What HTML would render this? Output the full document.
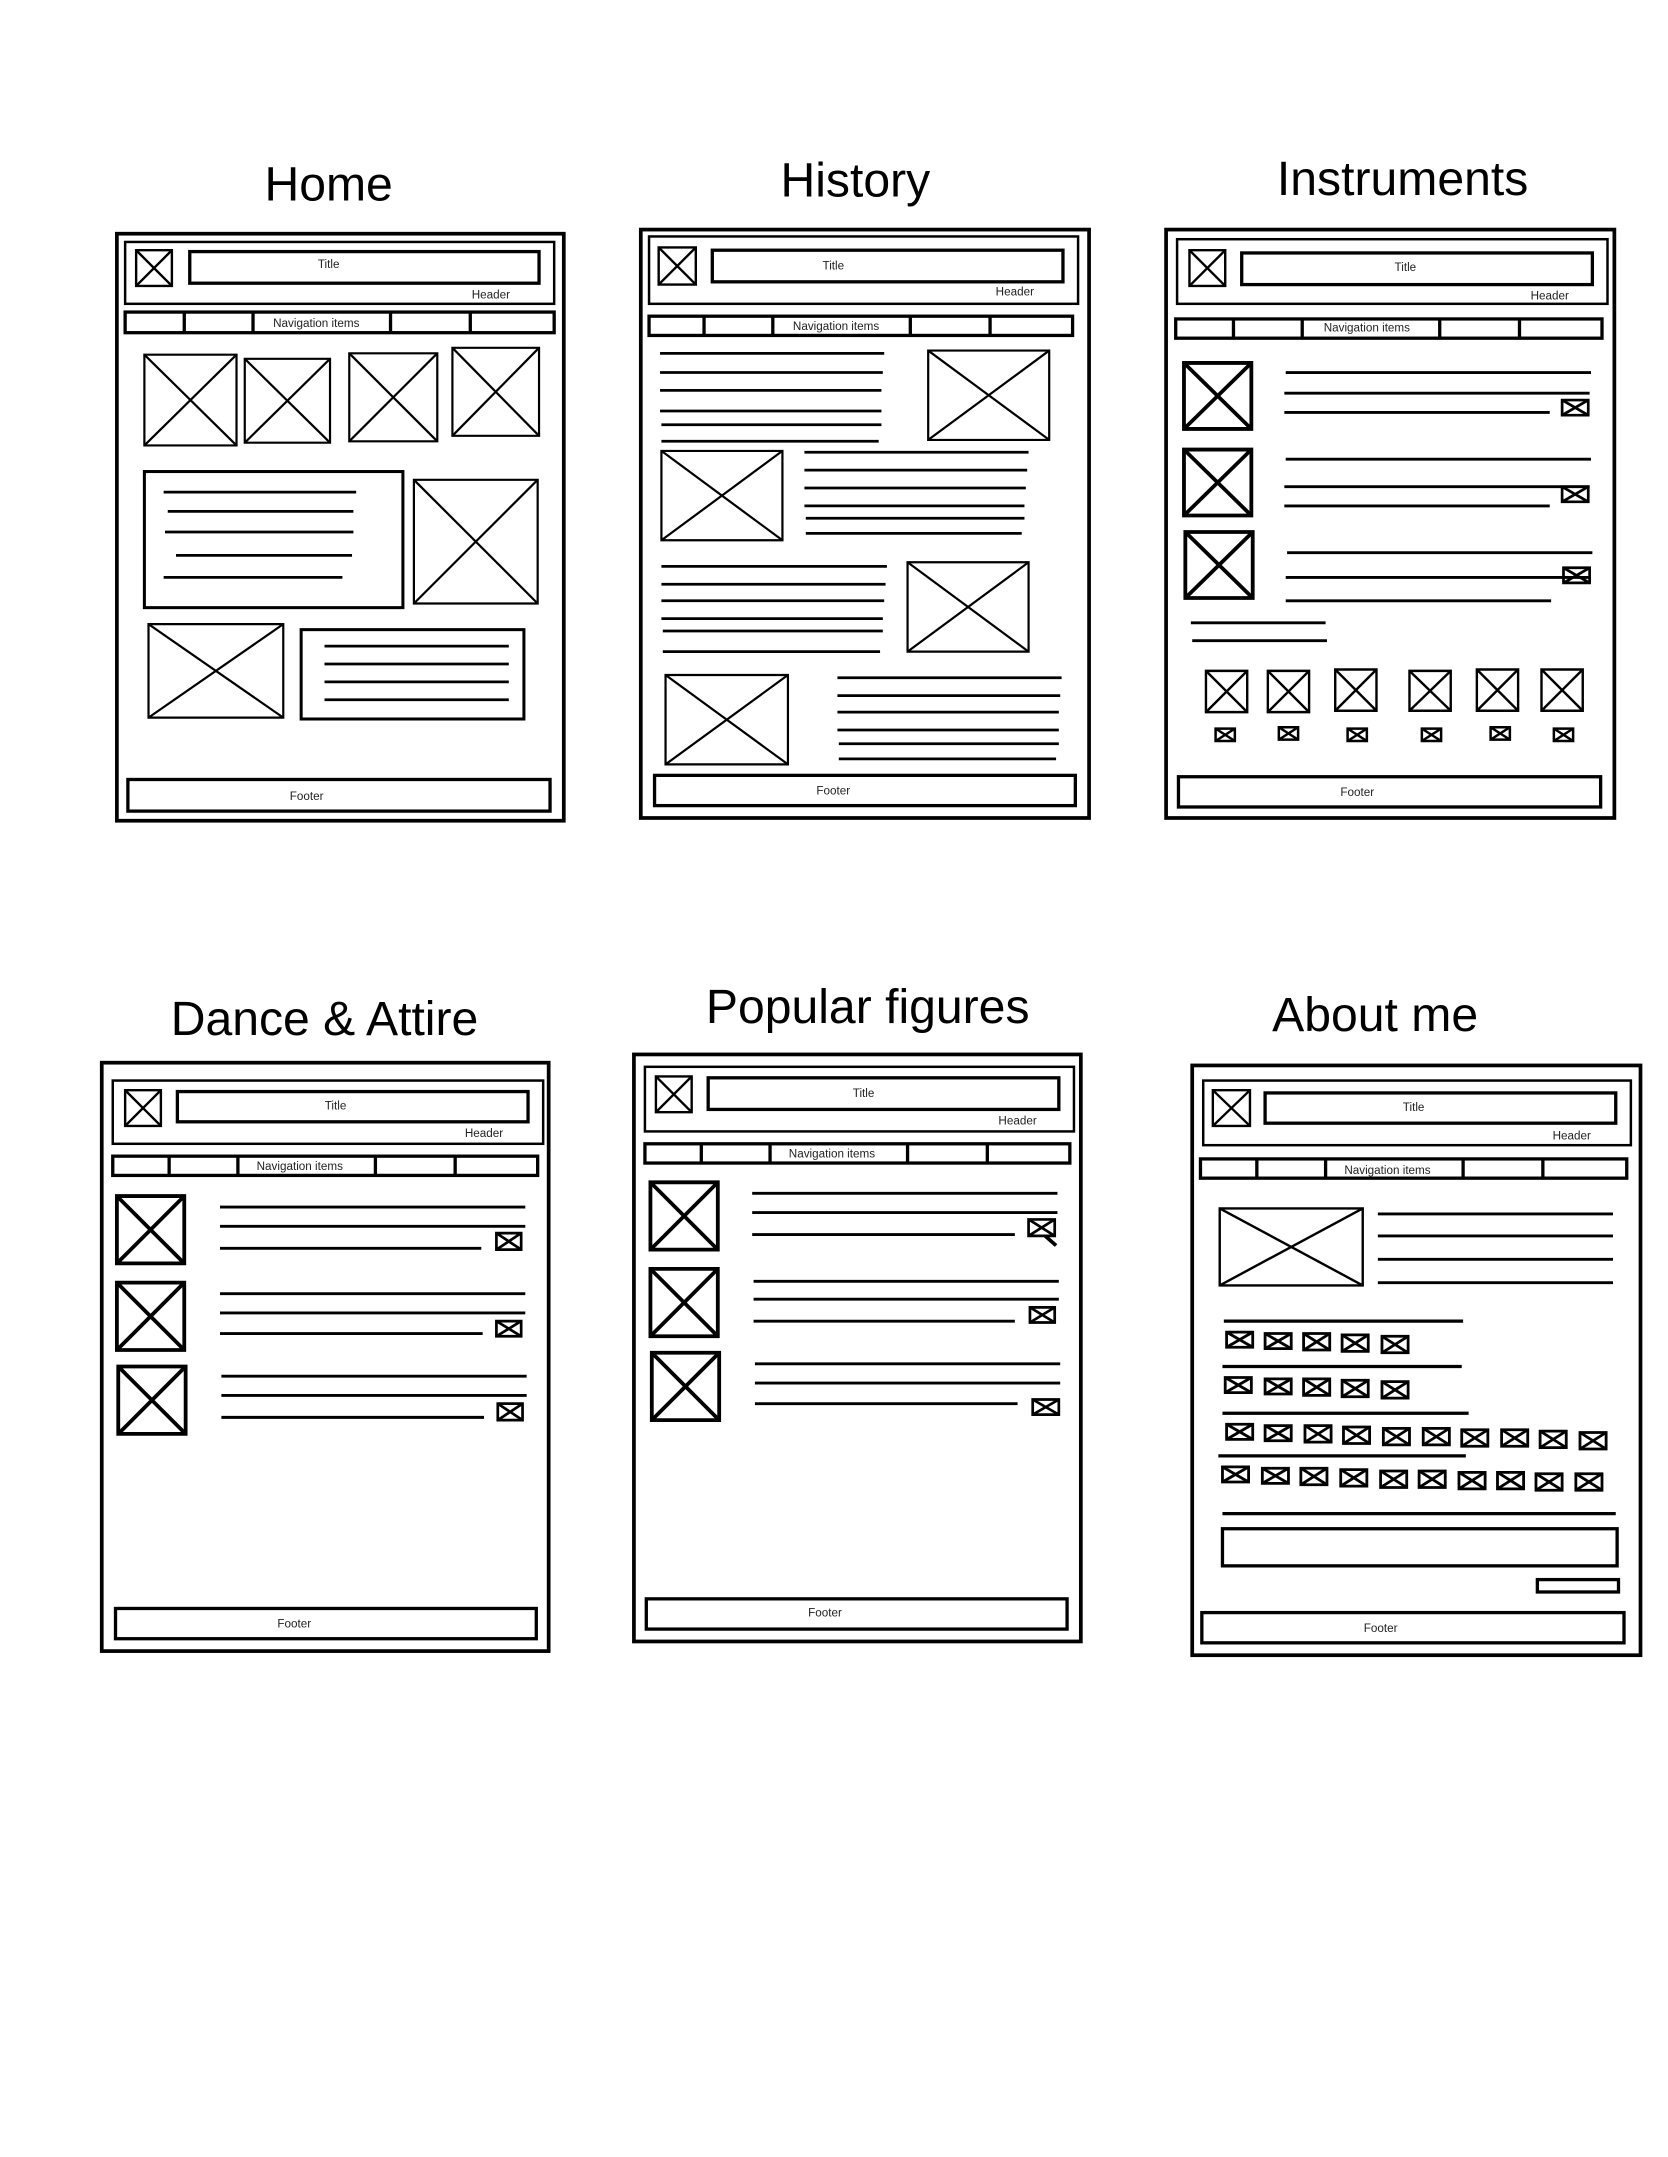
<!DOCTYPE html>
<html><head><meta charset="utf-8"><style>
html,body{margin:0;padding:0;background:#fff;width:1668px;height:2157px;overflow:hidden}
svg{display:block}
text{font-family:"Liberation Sans",sans-serif;fill:#000}
.t{font-size:35px;text-anchor:middle}
.s{font-size:8.5px;text-anchor:middle;fill:#222}
</style></head><body>
<svg width="1668" height="2157" viewBox="0 0 1213 1569" preserveAspectRatio="none" xmlns="http://www.w3.org/2000/svg">
<defs>
<symbol id="x" viewBox="0 0 100 100" preserveAspectRatio="none" overflow="visible">
<g fill="none" stroke="#000" vector-effect="non-scaling-stroke">
<rect x="0" y="0" width="100" height="100" vector-effect="non-scaling-stroke"/>
<line x1="0" y1="0" x2="100" y2="100" vector-effect="non-scaling-stroke"/>
<line x1="100" y1="0" x2="0" y2="100" vector-effect="non-scaling-stroke"/>
</g></symbol>
</defs>
<g fill="none" stroke="#000" stroke-width="2.4">

<!-- HOME -->
<rect x="85" y="170" width="325" height="427" stroke-width="2.7"/>
<rect x="91" y="176" width="312" height="45" stroke-width="1.8"/>
<use href="#x" x="99" y="182" width="26" height="26" stroke-width="2.4"/>
<rect x="138" y="183" width="254" height="23"/>
<rect x="91" y="227" width="312" height="15"/>
<path d="M134 227v15M184 227v15M284 227v15M342 227v15"/>
<use href="#x" x="105" y="258" width="67" height="66" stroke-width="2.2"/>
<use href="#x" x="178" y="261" width="62" height="61" stroke-width="2.2"/>
<use href="#x" x="254" y="257" width="64" height="64" stroke-width="2.2"/>
<use href="#x" x="329" y="253" width="63" height="64" stroke-width="2.2"/>
<rect x="105" y="343" width="188" height="99" stroke-width="2.2"/>
<path d="M119 358h140M122 372h135M120 387h137M128 404h128M119 420h130" stroke-width="2"/>
<use href="#x" x="301" y="349" width="90" height="90" stroke-width="2.2"/>
<use href="#x" x="108" y="454" width="98" height="68" stroke-width="2.2"/>
<rect x="219" y="458" width="162" height="65" stroke-width="2.2"/>
<path d="M236 470h134M236 483h134M236 496h134M236 509h134" stroke-width="2"/>
<rect x="93" y="567" width="307" height="23"/>

<!-- HISTORY -->
<rect x="466" y="167" width="326" height="428" stroke-width="2.7"/>
<rect x="472" y="172" width="312" height="49" stroke-width="1.8"/>
<use href="#x" x="479" y="180" width="27" height="27" stroke-width="2.4"/>
<rect x="518" y="182" width="255" height="23"/>
<rect x="472" y="230" width="308" height="14"/>
<path d="M512 230v14M562 230v14M662 230v14M720 230v14"/>
<path d="M480 257h163M480 271h162M480 284h161M480 299h161M481 309h160M481 321h158" stroke-width="2"/>
<use href="#x" x="675" y="255" width="88" height="65" stroke-width="2.2"/>
<use href="#x" x="481" y="328" width="88" height="65" stroke-width="2.2"/>
<path d="M585 329h163M585 342h162M585 355h161M585 368h160M586 377h159M586 388h157" stroke-width="2"/>
<path d="M481 412h164M481 425h163M481 437h162M481 450h161M482 459h160M482 474h158" stroke-width="2"/>
<use href="#x" x="660" y="409" width="88" height="65" stroke-width="2.2"/>
<use href="#x" x="484" y="491" width="89" height="65" stroke-width="2.2"/>
<path d="M609 493h163M609 506h162M609 518h161M609 531h161M610 541h160M610 552h158" stroke-width="2"/>
<rect x="476" y="564" width="306" height="22"/>

<!-- INSTRUMENTS -->
<rect x="848" y="167" width="326" height="428" stroke-width="2.7"/>
<rect x="856" y="174" width="313" height="47" stroke-width="1.8"/>
<use href="#x" x="865" y="182" width="26" height="26" stroke-width="2.4"/>
<rect x="903" y="184" width="255" height="23"/>
<rect x="855" y="232" width="310" height="14"/>
<path d="M897 232v14M947 232v14M1047 232v14M1105 232v14"/>
<use href="#x" x="861" y="264" width="49" height="48" stroke-width="3.8"/>
<use href="#x" x="861" y="327" width="49" height="48" stroke-width="3.8"/>
<use href="#x" x="862" y="387" width="49" height="48" stroke-width="3.8"/>
<path d="M935 271h222M934 286h222M934 300h193M935 334h222M934 354h222M934 368h193M936 402h222M935 420h222M935 437h193M866 453h98M867 466h98" stroke-width="2.1"/>
<use href="#x" x="1136" y="291" width="19" height="11" stroke-width="2.7"/>
<use href="#x" x="1136" y="354" width="19" height="11" stroke-width="2.7"/>
<use href="#x" x="1137" y="413" width="19" height="11" stroke-width="2.7"/>
<use href="#x" x="877" y="488" width="30" height="30" stroke-width="2.4"/>
<use href="#x" x="922" y="488" width="30" height="30" stroke-width="2.4"/>
<use href="#x" x="971" y="487" width="30" height="30" stroke-width="2.4"/>
<use href="#x" x="1025" y="488" width="30" height="29" stroke-width="2.4"/>
<use href="#x" x="1074" y="487" width="30" height="30" stroke-width="2.4"/>
<use href="#x" x="1121" y="487" width="30" height="30" stroke-width="2.4"/>
<use href="#x" x="884" y="530" width="14" height="9" stroke-width="2.5"/>
<use href="#x" x="930" y="529" width="14" height="9" stroke-width="2.5"/>
<use href="#x" x="980" y="530" width="14" height="9" stroke-width="2.5"/>
<use href="#x" x="1034" y="530" width="14" height="9" stroke-width="2.5"/>
<use href="#x" x="1084" y="529" width="14" height="9" stroke-width="2.5"/>
<use href="#x" x="1130" y="530" width="14" height="9" stroke-width="2.5"/>
<rect x="857" y="565" width="307" height="22"/>

<!-- DANCE -->
<rect x="74" y="773" width="325" height="428" stroke-width="2.7"/>
<rect x="82" y="786" width="313" height="46" stroke-width="1.8"/>
<use href="#x" x="91" y="793" width="26" height="26" stroke-width="2.4"/>
<rect x="129" y="794" width="255" height="22"/>
<rect x="82" y="841" width="309" height="14"/>
<path d="M123 841v14M173 841v14M273 841v14M331 841v14"/>
<use href="#x" x="85" y="870" width="49" height="49" stroke-width="3.8"/>
<use href="#x" x="85" y="933" width="49" height="49" stroke-width="3.8"/>
<use href="#x" x="86" y="994" width="49" height="49" stroke-width="3.8"/>
<path d="M160 878h222M160 892h222M160 908h190M160 941h222M160 955h222M160 970h191M161 1001h222M161 1015h222M161 1031h191" stroke-width="2.1"/>
<use href="#x" x="361" y="897" width="18" height="12" stroke-width="2.7"/>
<use href="#x" x="361" y="961" width="18" height="11" stroke-width="2.7"/>
<use href="#x" x="362" y="1021" width="18" height="12" stroke-width="2.7"/>
<rect x="84" y="1170" width="306" height="22"/>

<!-- POPULAR -->
<rect x="461" y="767" width="325" height="427" stroke-width="2.7"/>
<rect x="469" y="776" width="312" height="47" stroke-width="1.8"/>
<use href="#x" x="477" y="783" width="26" height="26" stroke-width="2.4"/>
<rect x="515" y="784" width="255" height="23"/>
<rect x="469" y="832" width="309" height="14"/>
<path d="M510 832v14M560 832v14M660 832v14M718 832v14"/>
<use href="#x" x="473" y="860" width="49" height="49" stroke-width="3.8"/>
<use href="#x" x="473" y="923" width="49" height="49" stroke-width="3.8"/>
<use href="#x" x="474" y="984" width="49" height="49" stroke-width="3.8"/>
<path d="M547 868h222M547 882h222M547 898h191M548 932h222M548 945h222M548 961h190M549 992h222M549 1006h222M549 1021h191" stroke-width="2.1"/>
<use href="#x" x="748" y="887" width="19" height="12" stroke-width="2.7"/>
<path d="M760 899l8 7" stroke-width="2.7"/>
<use href="#x" x="749" y="951" width="18" height="11" stroke-width="2.7"/>
<use href="#x" x="751" y="1018" width="19" height="11" stroke-width="2.7"/>
<rect x="470" y="1163" width="306" height="22"/>

<!-- ABOUT -->
<rect x="867" y="775" width="326" height="429" stroke-width="2.7"/>
<rect x="875" y="786" width="311" height="47" stroke-width="1.8"/>
<use href="#x" x="882" y="793" width="27" height="26" stroke-width="2.4"/>
<rect x="920" y="795" width="255" height="22"/>
<rect x="873" y="843" width="310" height="14"/>
<path d="M914 843v14M964 843v14M1064 843v14M1122 843v14"/>
<use href="#x" x="887" y="879" width="104" height="56" stroke-width="2.4"/>
<path d="M1002 883h171M1002 899h171M1002 916h171M1002 933h171" stroke-width="2.1"/>
<path d="M890 961h174M889 994h174M889 1028h179M886 1059h180M889 1101h286" stroke-width="2.4"/>
<g stroke-width="2.8">
<use href="#x" x="892" y="969" width="19" height="11"/>
<use href="#x" x="920" y="970" width="19" height="11"/>
<use href="#x" x="948" y="970" width="19" height="12"/>
<use href="#x" x="976" y="971" width="19" height="12"/>
<use href="#x" x="1005" y="972" width="19" height="12"/>
<use href="#x" x="891" y="1002" width="19" height="11"/>
<use href="#x" x="920" y="1003" width="19" height="11"/>
<use href="#x" x="948" y="1003" width="19" height="12"/>
<use href="#x" x="976" y="1004" width="19" height="12"/>
<use href="#x" x="1005" y="1005" width="19" height="12"/>
<use href="#x" x="892" y="1036" width="19" height="11"/>
<use href="#x" x="920" y="1037" width="19" height="11"/>
<use href="#x" x="949" y="1037" width="19" height="12"/>
<use href="#x" x="977" y="1038" width="19" height="12"/>
<use href="#x" x="1006" y="1039" width="19" height="12"/>
<use href="#x" x="1035" y="1039" width="19" height="12"/>
<use href="#x" x="1063" y="1040" width="19" height="12"/>
<use href="#x" x="1092" y="1040" width="19" height="12"/>
<use href="#x" x="1120" y="1041" width="19" height="12"/>
<use href="#x" x="1149" y="1042" width="19" height="12"/>
<use href="#x" x="889" y="1067" width="19" height="11"/>
<use href="#x" x="918" y="1068" width="19" height="11"/>
<use href="#x" x="946" y="1068" width="19" height="12"/>
<use href="#x" x="975" y="1069" width="19" height="12"/>
<use href="#x" x="1004" y="1070" width="19" height="12"/>
<use href="#x" x="1032" y="1070" width="19" height="12"/>
<use href="#x" x="1061" y="1071" width="19" height="12"/>
<use href="#x" x="1089" y="1071" width="19" height="12"/>
<use href="#x" x="1117" y="1072" width="19" height="12"/>
<use href="#x" x="1146" y="1072" width="19" height="12"/>
</g>
<rect x="889" y="1112" width="287" height="27"/>
<rect x="1118" y="1149" width="59" height="9"/>
<rect x="874" y="1173" width="307" height="22"/>
</g>

<text class="t" x="239" y="146">Home</text>
<text class="t" x="622" y="143">History</text>
<text class="t" x="1020" y="142">Instruments</text>
<text class="t" x="236" y="753">Dance &amp; Attire</text>
<text class="t" x="631" y="744">Popular figures</text>
<text class="t" x="1000" y="750">About me</text>

<text class="s" x="239" y="195">Title</text><text class="s" x="357" y="217">Header</text><text class="s" x="230" y="238">Navigation items</text><text class="s" x="223" y="582">Footer</text>
<text class="s" x="606" y="196">Title</text><text class="s" x="738" y="215">Header</text><text class="s" x="608" y="240">Navigation items</text><text class="s" x="606" y="578">Footer</text>
<text class="s" x="1022" y="197">Title</text><text class="s" x="1127" y="218">Header</text><text class="s" x="994" y="241">Navigation items</text><text class="s" x="987" y="579">Footer</text>
<text class="s" x="244" y="807">Title</text><text class="s" x="352" y="827">Header</text><text class="s" x="218" y="851">Navigation items</text><text class="s" x="214" y="1184">Footer</text>
<text class="s" x="628" y="798">Title</text><text class="s" x="740" y="818">Header</text><text class="s" x="605" y="842">Navigation items</text><text class="s" x="600" y="1176">Footer</text>
<text class="s" x="1028" y="808">Title</text><text class="s" x="1143" y="829">Header</text><text class="s" x="1009" y="854">Navigation items</text><text class="s" x="1004" y="1187">Footer</text>
</svg>
</body></html>
